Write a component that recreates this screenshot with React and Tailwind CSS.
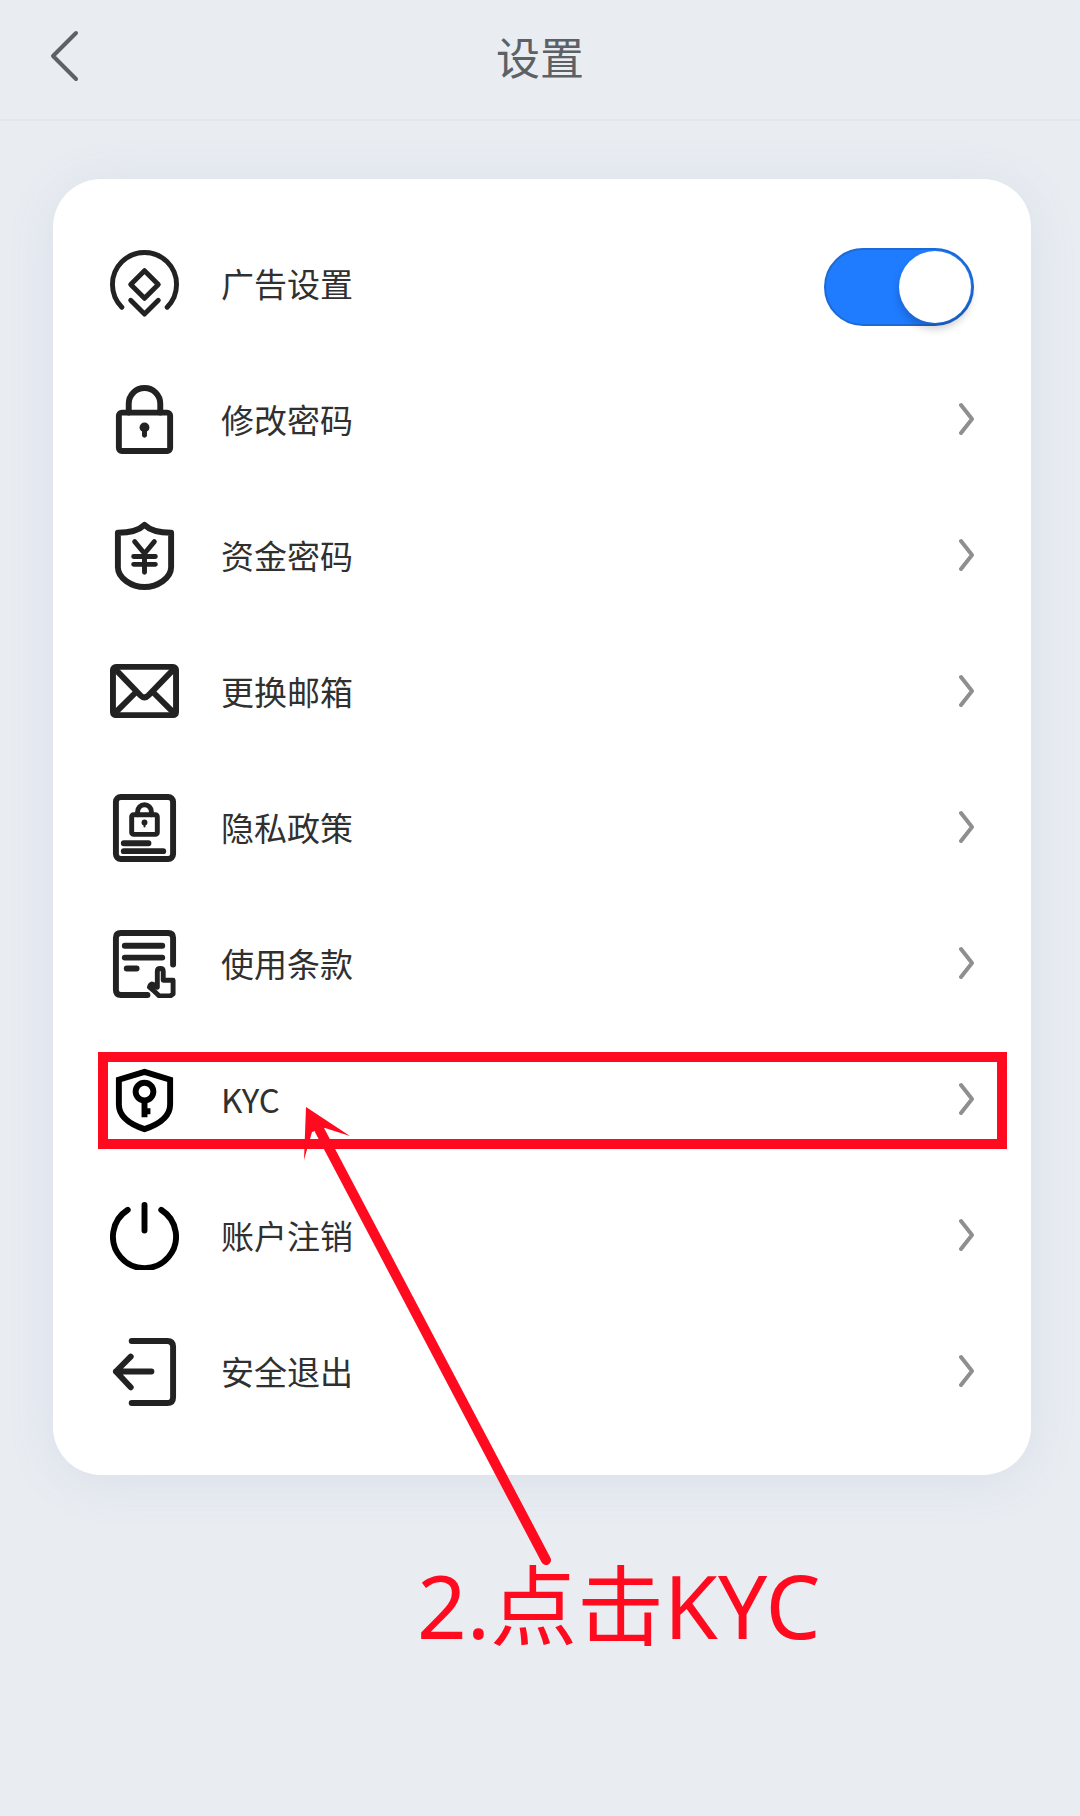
import React from 'react';

const Icon = ({ children, width = 6, color = '#222222' }) => (
    <svg className="w-[69px] h-[69px] shrink-0" viewBox="0 0 70 70" fill="none" stroke={color} strokeWidth={width} strokeLinecap="round" strokeLinejoin="round" aria-hidden="true">
        {children}
    </svg>
);

const AdIcon = () => (
    <Icon width={5}>
        <path d="M12 59A32.5 32.5 0 1 1 58 59" />
        <path d="M35 22L49 36L35 50L21 36Z" />
        <path d="M21 52L35 66L49 52" />
    </Icon>
);

const LockIcon = () => (
    <Icon>
        <rect x="9" y="28" width="52" height="39" rx="3" />
        <path d="M19 28V19A16 16 0 0 1 51 19V28" />
        <circle cx="35" cy="43" r="5" fill="#222222" stroke="none" />
        <path d="M35 43V51" strokeWidth="5" />
    </Icon>
);

const FundIcon = () => (
    <Icon>
        <path d="M35 4C28 11 18 12 8 12V47C8 58 22 67 35 67C48 67 62 58 62 47V12C52 12 42 11 35 4Z" />
        <path d="M25 21L35 33L45 21M35 33V52M24 36H46M24 44H46" strokeWidth="5" />
    </Icon>
);

const MailIcon = () => (
    <Icon>
        <rect x="3" y="10" width="64" height="49" rx="3" />
        <path d="M5 12L31 39Q35 43 39 39L65 12M5 57L25 37M65 57L45 37" />
    </Icon>
);

const PrivacyIcon = () => (
    <Icon>
        <rect x="6" y="4" width="58" height="63" rx="5" />
        <rect x="22" y="22" width="26" height="20" rx="2" strokeWidth="5" />
        <path d="M28 22V19A7 7 0 0 1 42 19V22" strokeWidth="5" />
        <circle cx="35" cy="30" r="3" fill="#222222" stroke="none" />
        <path d="M35 30V34" strokeWidth="2" />
        <path d="M14 51H39M14 59H54" />
    </Icon>
);

const TermsIcon = () => (
    <Icon>
        <path d="M38 67H11Q6 67 6 62V9Q6 4 11 4H59Q64 4 64 9V36" />
        <path d="M15 17H53M15 29H53M17 40H27" />
        <path d="M48 56V43Q48 40 51 40Q54 40 54 43V52H64V66L61 68H50Q45 63 40 59Q41 54 45 57L48 59Z" strokeWidth="5" />
    </Icon>
);

const KycIcon = () => (
    <Icon color="#000000">
        <path d="M35 7L61 15V40C61 53 50 60 35 65C20 60 9 53 9 40V15Z" strokeLinejoin="miter" />
        <circle cx="35" cy="27" r="9" />
        <path d="M35 37V53M35 47H41" strokeLinecap="butt" />
    </Icon>
);

const PowerIcon = () => (
    <Icon color="#000000">
        <path d="M18 9A32 32 0 1 0 52 9" />
        <path d="M35 4V30" />
    </Icon>
);

const ExitIcon = () => (
    <Icon>
        <path d="M22 4H58Q64 4 64 10V61Q64 67 58 67H22" />
        <path d="M42 35H6M21 20L6 35L21 51" />
    </Icon>
);

const items = [
    { label: '修改密码', icon: LockIcon },
    { label: '资金密码', icon: FundIcon },
    { label: '更换邮箱', icon: MailIcon },
    { label: '隐私政策', icon: PrivacyIcon },
    { label: '使用条款', icon: TermsIcon },
    { label: 'KYC', icon: KycIcon, marked: true },
    { label: '账户注销', icon: PowerIcon },
    { label: '安全退出', icon: ExitIcon },
];

// red frame and arrow drawn over the row the guide points at
const Marker = () => (
    <div className="absolute inset-0 z-10 pointer-events-none" aria-hidden="true">
        <div className="absolute left-[45px] right-6 top-[21px] bottom-[18px] border-10 border-[#ff0a1f]" />
        <svg className="absolute left-[240px] top-[70px] w-[270px] h-[470px]" viewBox="0 0 270 470">
            <path d="M27 30L253 459" stroke="#ff0a1f" strokeWidth="10" strokeLinecap="round" />
            <path d="M13 6L57 35L32 27L19 31L11 59Z" fill="#ff0a1f" />
        </svg>
    </div>
);

const App = () => {

    const [adsOn, setAdsOn] = React.useState(true);

    return (
        <div className="min-h-screen bg-[#e9edf2] font-['Noto_Sans_CJK_SC',sans-serif] text-[#303030]">
            <header className="h-[121px] grid grid-cols-3 items-center border-b-2 border-[#e3e6ea] px-[49px] pb-[7px]">
                <button type="button" aria-label="返回" className="justify-self-start cursor-pointer">
                    <svg className="w-8 h-[52px]" viewBox="0 0 32 52" fill="none" stroke="#5d6166" strokeWidth="4" strokeLinecap="round" strokeLinejoin="round">
                        <path d="M27 3L4 26L27 49" />
                    </svg>
                </button>
                <h1 className="text-center text-[44px] leading-[56px] text-[#5d6166]">设置</h1>
            </header>
            <main className="pt-[58px] pl-[53px] pr-[49px]">
                <ul className="py-9 rounded-[48px] bg-white shadow-[0_6px_50px_rgba(100,110,160,0.11)]">
                    <li className="h-[136px] px-[57px] flex items-center gap-[42px]">
                        <AdIcon />
                        <label htmlFor="ads" className="flex-1 text-[33px] leading-[48px]">广告设置</label>
                        <div className="pt-2">
                            <div className="relative w-[150px] h-[78px]">
                                <input id="ads" type="checkbox" role="switch" checked={adsOn} onChange={() => setAdsOn(!adsOn)} className="peer appearance-none block w-full h-full rounded-full border-2 border-gray-300 bg-gray-200 checked:border-[#1d6ad6] checked:bg-[#1f7cff] cursor-pointer" />
                                <span className="absolute left-[3px] top-[3px] size-[72px] rounded-full bg-white shadow-[0_6px_8px_rgba(0,0,0,0.2)] pointer-events-none peer-checked:left-[75px]" />
                            </div>
                        </div>
                    </li>
                    {items.map(({ label, icon: RowIcon, marked }) => (
                        <li key={label} className="relative">
                            <button type="button" className="w-full h-[136px] px-[57px] flex items-center gap-[42px] text-left cursor-pointer">
                                <RowIcon />
                                <span className="flex-1 text-[33px] leading-[48px]">{label}</span>
                                <svg className="w-[18px] h-9" viewBox="0 0 18 36" fill="none" stroke="#8f8f8f" strokeWidth="4" strokeLinecap="round" strokeLinejoin="round" aria-hidden="true">
                                    <path d="M5 4L16 18L5 32" />
                                </svg>
                            </button>
                            {marked && <Marker />}
                        </li>
                    ))}
                </ul>
                <p className="mt-20 pl-[364px] font-['Noto_Sans','Noto_Sans_CJK_SC',sans-serif] text-[87px] leading-[100px] whitespace-nowrap text-[#ff0a1f]">2.点击KYC</p>
            </main>
        </div>
    );
};

export default App;
